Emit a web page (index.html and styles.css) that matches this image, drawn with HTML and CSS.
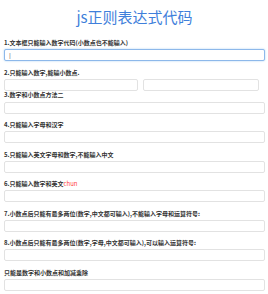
FILE: index.html
```html
<!DOCTYPE html>
<html lang="zh-CN">
<head>
    <meta charset="UTF-8">
    <meta name="viewport" content="width=device-width, initial-scale=1.0">
    <title>js正则表达式代码</title>
    <link rel="stylesheet" href="styles.css">
</head>
<body>
    <div class="container">
        <h1>js正则表达式代码</h1>

        <div class="form-group">
            <label>1.文本框只能输入数字代码(小数点也不能输入)</label>
            <input type="text" class="form-control focused" placeholder="|">
        </div>

        <div class="form-group">
            <label>2.只能输入数字,能输小数点.</label>
            <div class="pair">
                <input type="text" class="form-control">
                <input type="text" class="form-control">
            </div>
            <label class="tight">3.数字和小数点方法二</label>
            <input type="text" class="form-control">
        </div>

        <div class="form-group">
            <label>4.只能输入字母和汉字</label>
            <input type="text" class="form-control">
        </div>

        <div class="form-group">
            <label>5.只能输入英文字母和数字,不能输入中文</label>
            <input type="text" class="form-control">
        </div>

        <div class="form-group">
            <label>6.只能输入数字和英文<span class="red">chun</span></label>
            <input type="text" class="form-control">
        </div>

        <div class="form-group">
            <label>7.小数点后只能有最多两位(数字,中文都可输入),不能输入字母和运算符号:</label>
            <input type="text" class="form-control">
        </div>

        <div class="form-group">
            <label>8.小数点后只能有最多两位(数字,字母,中文都可输入),可以输入运算符号:</label>
            <input type="text" class="form-control">
        </div>

        <div class="form-group">
            <label>只能是数字和小数点和加减乘除</label>
            <input type="text" class="form-control">
        </div>
    </div>
</body>
</html>
```

FILE: styles.css
```css
body {
    margin: 0;
    background-color: #fff;
    font-family: "Noto Sans CJK SC", "Liberation Sans", sans-serif;
    color: #333;
}

.container {
    padding: 0 3px 0 4px;
}

h1 {
    margin: 8px 0 13px;
    font-size: 15px;
    line-height: 18px;
    font-weight: 400;
    text-align: center;
    color: #3f7fdb;
}

.form-group {
    margin-bottom: 7.5px;
}

label {
    display: block;
    font-size: 6px;
    line-height: 8px;
    font-weight: 700;
    margin-bottom: 2px;
    white-space: nowrap;
}

label.tight {
    margin-top: 0;
    margin-bottom: 3px;
}

.red {
    color: #f44;
    font-weight: 400;
}

.form-control {
    display: block;
    box-sizing: border-box;
    width: 100%;
    height: 12px;
    margin: 0;
    padding: 0 4px;
    border: 1px solid #e2e2e2;
    border-radius: 2px;
    font-size: 7px;
    outline: none;
    background: #fff;
}

.form-control.focused {
    border-color: #8db8ea;
    box-shadow: 0 0 2px rgba(102, 175, 233, 0.6);
}

.form-control::placeholder {
    color: #777;
}

.pair {
    display: grid;
    grid-template-columns: 134px 116px;
    column-gap: 5px;
}
```
